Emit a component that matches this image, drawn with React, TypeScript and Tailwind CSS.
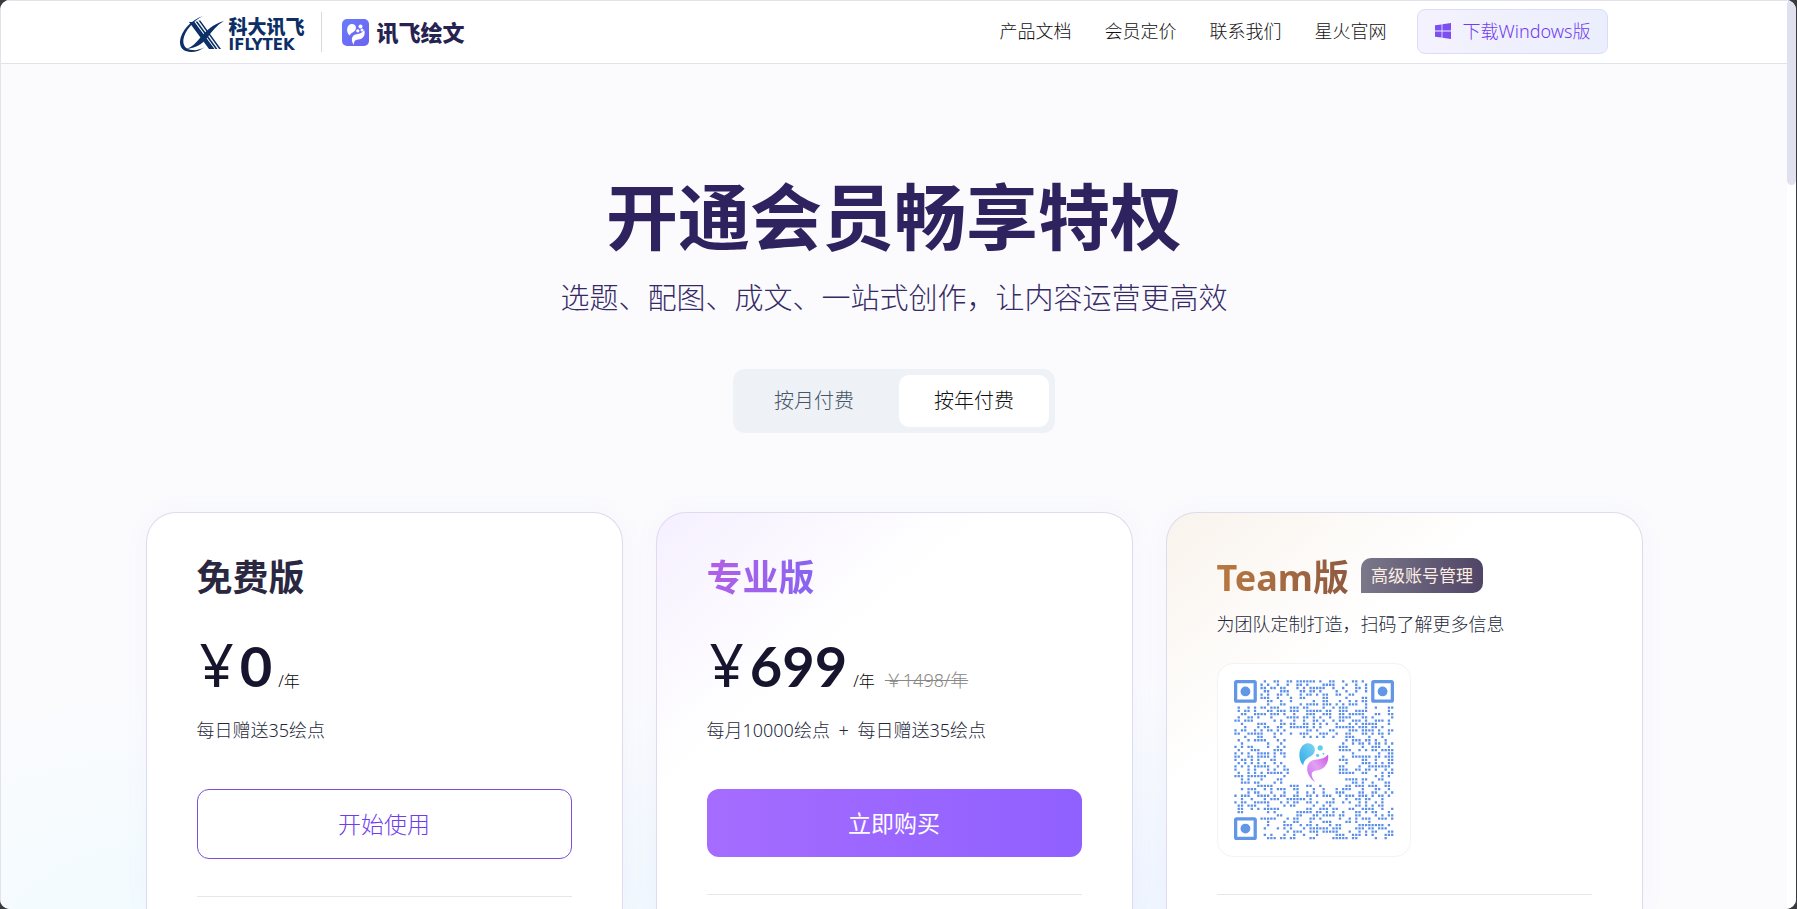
import React from 'react';
import clsx from 'clsx';

const navLinks = ['产品文档', '会员定价', '联系我们', '星火官网'];

const IflytekMark = () => (
  <svg viewBox="0 0 45 37" className="w-[45px] h-[37px] mt-1 shrink-0" fill="#0b2f66" aria-hidden="true">
    <path d="M23 0C11 4 1 15 0 25c-.6 7 4 11 11 11 5 0 10-2 14-5-5 2.600-9 3.500-12.500 3C6 33.400 2.500 30 3.500 23 4.800 15 13 5 23 0Z" />
    <path d="M44 5C33 8 26 15 20 22c-4 5-8 9-14 11 10-.6 16-5 21-11C32 15 37 9 44 5Z" />
    <path d="M9 6h5.500l20 27h-5.500zM15.500 5.500h2l20 27.500h-2zM18.500 4.500h1.800l20.700 28.500h-1.900z" />
  </svg>
);

const AppIcon = () => (
  <svg viewBox="0 0 27 27" className="w-[27px] h-[27px] shrink-0" aria-hidden="true">
    <defs>
      <linearGradient id="app-icon" x1="0" y1="0" x2="1" y2="1">
        <stop offset="0" stopColor="#6a7cfa" />
        <stop offset="1" stopColor="#6c62f2" />
      </linearGradient>
    </defs>
    <rect width="27" height="27" rx="5" fill="url(#app-icon)" />
    <path d="M8 16.500C4 14.500 3.800 5.500 9.600 5c4-.2 5.400 3.400 3.600 6.200C11.500 13.500 8.500 13.500 8 16.500Z" fill="#fff" />
    <path d="M12 26C8.500 22 9.500 16.500 13.500 15.600c3.600-.6 6.500-1.400 8.700-4.600 1.600 5-1 9.400-6 9.600-3 .2-4.600 1.800-4.200 5.400Z" fill="#fff" />
    <circle cx="18.500" cy="7.500" r="2" fill="#fff" />
    <circle cx="15.800" cy="11.800" r="1.600" fill="#fff" />
    <circle cx="20" cy="11" r="1.500" fill="#fff" />
  </svg>
);

const WindowsIcon = () => (
  <svg viewBox="0 0 16 16" className="w-4 h-4" fill="#7c4ff0" aria-hidden="true">
    <path d="M0 2.300 6.600 1.400v6.200H0zM7.400 1.300 16 0v7.600H7.400zM0 8.400h6.600v6.200L0 13.700zM7.400 8.400H16V16l-8.600-1.200z" />
  </svg>
);

const QR_SIZE = 49;

const isReserved = (x: number, y: number) => {
  const nearLeft = x < 8;
  const nearTop = y < 8;
  const corner = (nearLeft && nearTop) || (x > QR_SIZE - 9 && nearTop) || (nearLeft && y > QR_SIZE - 9);
  const logo = x > 16 && x < 32 && y > 17 && y < 32;
  return corner || logo;
};

const buildModules = () => {
  let seed = 20731;
  const modules: [number, number][] = [];
  for (let y = 0; y < QR_SIZE; y++) {
    for (let x = 0; x < QR_SIZE; x++) {
      seed = (seed * 16807) % 2147483647;
      if (!isReserved(x, y) && seed % 1000 < 480) modules.push([x, y]);
    }
  }
  return modules;
};

const qrPath = buildModules()
  .map(([x, y]) => `M${x * 10 + 1} ${y * 10 + 1}h7v7h-7z`)
  .join('');

const QrCode = () => (
  <svg viewBox="0 0 490 490" className="w-full h-full" role="img" aria-label="扫码了解更多信息">
    <defs>
      <linearGradient id="qr-blue" x1="1" y1="0" x2="0" y2="1">
        <stop offset="0" stopColor="#7fd6f2" />
        <stop offset="1" stopColor="#2fa9ea" />
      </linearGradient>
      <linearGradient id="qr-pink" x1="1" y1="0" x2="0" y2="1">
        <stop offset="0" stopColor="#cc55e0" />
        <stop offset="0.5" stopColor="#e3a0f5" />
        <stop offset="1" stopColor="#c070f0" />
      </linearGradient>
    </defs>
    <path d={qrPath} fill="#5c8fe8" />
    {[[0, 0], [420, 0], [0, 420]].map(([x, y]) => (
      <g key={`${x}-${y}`} transform={`translate(${x} ${y})`}>
        <rect x="5" y="5" width="60" height="60" rx="3" fill="none" stroke="#6297e8" strokeWidth="10" />
        <circle cx="35" cy="35" r="15" fill="#6297e8" />
      </g>
    ))}
    <path d="M212 262C192 240 198 196 226 194c20 0 28 20 16 34-14 12-28 12-30 34Z" fill="url(#qr-blue)" />
    <path d="M248 312c-30-20-34-62 0-68 18-2 30-4 40-16 4 26-12 48-36 49-18 2-18 17-4 35Z" fill="url(#qr-pink)" />
    <circle cx="264" cy="208" r="8" fill="#62cdec" />
    <circle cx="256" cy="231" r="5" fill="#62cdec" />
    <circle cx="274" cy="226" r="3" fill="#62cdec" />
  </svg>
);

const Header = () => (
  <header className="h-16 bg-white border-y border-[#e2e3ea] shrink-0">
    <div className="w-4/5 h-full mx-auto flex items-center justify-between">
      <div className="flex items-center">
        <a href="#iflytek" className="flex items-center gap-1 text-[#0b2f66]">
          <IflytekMark />
          <span className="pt-1.5 flex flex-col">
            <span className="text-[19px] leading-5 font-black">科大讯飞</span>
            <span className="text-[15px] leading-4 font-bold font-['DejaVu_Sans',sans-serif]">IFLYTEK</span>
          </span>
        </a>
        <span className="w-px h-10 bg-[#d8d9df] ml-4 mr-5" />
        <a href="#home" className="flex items-center gap-2 text-[#262351]">
          <AppIcon />
          <span className="text-[22px] leading-7 font-black">讯飞绘文</span>
        </a>
      </div>
      <div className="pb-0.5 flex items-center gap-[30px]">
        <nav className="flex items-center gap-[33px]">
          {navLinks.map((link) => (
            <a key={link} href={`#${link}`} className="text-[18px] leading-7 font-light text-[#111]">{link}</a>
          ))}
        </nav>
        <button className="h-[45px] px-[17px] flex items-center gap-3 rounded-lg border border-[#dcdcf6] bg-linear-to-r from-[#f4f2fe] to-[#ebeefc] text-[18px] font-light text-[#6f3cf0]">
          <WindowsIcon />
          下载Windows版
        </button>
      </div>
    </div>
  </header>
);

const BillingToggle = () => (
  <div role="tablist" className="mt-[51px] mx-auto flex gap-2.5 p-1.5 rounded-xl bg-[#eef1f6] text-[20px] font-light">
    <button role="tab" aria-selected="false" className="w-[150px] h-[52px] rounded-[10px] text-[#475569]">按月付费</button>
    <button role="tab" aria-selected="true" className="w-[150px] h-[52px] rounded-[10px] bg-white text-[#111]">按年付费</button>
  </div>
);

type CardProps = { title: string; titleClass: string; cardClass?: string; badge?: string; children: React.ReactNode };

const Card = ({ title, titleClass, cardClass = 'bg-white', badge, children }: CardProps) => (
  <article className={clsx('px-[50px] pt-[41px] rounded-t-[30px] border border-b-0 border-[#dedbee] shadow-[0_0_24px_rgba(120,130,220,0.05)]', cardClass)}>
    <div className="flex items-start gap-3">
      <h2 className={clsx('text-[36px] leading-12 font-bold', titleClass)}>{title}</h2>
      {badge && (
        <span className="mt-1 h-[35px] px-2.5 flex items-center rounded-[10px] rounded-bl-none bg-linear-to-r from-[#7b788a] to-[#504566] text-[17px] text-[#fdeee2]">{badge}</span>
      )}
    </div>
    {children}
    <hr className="mt-[37px] border-[#e6e7ec]" />
  </article>
);

const Price = ({ amount, original }: { amount: string; original?: string }) => (
  <p className="mt-[30px] mb-5 h-16 flex items-baseline text-[#17152d]">
    <span className="pl-[3px] pr-1.5 text-[60px] leading-16">¥</span>
    <span className="text-[56px] leading-16 font-bold font-['Lato',sans-serif]">{amount}</span>
    <span className="ml-1.5 text-[16px] font-light text-black">/年</span>
    {original && <del className="ml-2.5 text-[18px] font-light text-[#888]">{original}</del>}
  </p>
);

const App = () => (
  <div className="h-screen bg-[#3a3b3f] font-['Noto_Sans','Noto_Sans_CJK_SC',sans-serif]">
    <div className="h-full mr-px flex rounded-[10px] overflow-hidden bg-white">
      <div className="flex-1 flex flex-col border-l border-[#e2e3ea]">
        <Header />
        <main className="flex-1 min-h-0 flex flex-col overflow-hidden bg-[#fbfbfe] bg-[radial-gradient(ellipse_800px_380px_at_14%_105%,#effbff_0%,transparent_70%),radial-gradient(ellipse_900px_380px_at_54%_105%,#eaf2ff_0%,transparent_75%)]">
          <h1 className="mt-[108px] text-center text-[72px] leading-[88px] font-bold text-[#2f235f]">开通会员畅享特权</h1>
          <p className="mt-[18px] text-center text-[29px] leading-10 font-light text-[#362a66]">选题、配图、成文、一站式创作，让内容运营更高效</p>
          <BillingToggle />
          <section className="mt-[79px] w-full max-w-[1497px] mx-auto flex-1 grid grid-cols-3 gap-[33px]">
            <Card title="免费版" titleClass="text-[#2a2740]">
              <Price amount="0" />
              <p className="text-[18px] leading-7 font-light text-[#1e293b]">每日赠送35绘点</p>
              <button className="mt-[45px] w-full h-[70px] rounded-xl border border-[#7c4fd8] text-[23px] font-light text-[#6f3cf0]">开始使用</button>
            </Card>
            <Card
              title="专业版"
              titleClass="bg-linear-to-r from-[#b25fe6] to-[#8763f2] bg-clip-text text-transparent"
              cardClass="bg-white bg-linear-to-br from-[#f6f0ff] to-white to-35%"
            >
              <Price amount="699" original="￥1498/年" />
              <p className="text-[18px] leading-7 font-light text-[#1e293b]">每月10000绘点<span className="mx-1"> + </span>每日赠送35绘点</p>
              <button className="mt-[45px] w-full h-[68px] rounded-xl bg-linear-to-r from-[#a56cff] to-[#9060ff] text-[23px] text-white">立即购买</button>
            </Card>
            <Card
              title="Team版"
              titleClass="bg-linear-to-r from-[#b87840] to-[#8f5a40] bg-clip-text text-transparent"
              cardClass="bg-white bg-linear-to-br from-[#f9f3ec] to-white to-35%"
              badge="高级账号管理"
            >
              <p className="mt-2 text-[18px] leading-7 font-light text-[#1e293b]">为团队定制打造，扫码了解更多信息</p>
              <div className="mt-[25px] w-[194px] h-[194px] p-4 rounded-2xl border border-[#f3f2f5] bg-white">
                <QrCode />
              </div>
            </Card>
          </section>
        </main>
      </div>
      <div className="w-[9px] bg-white">
        <div className="h-[185px] rounded-full bg-[#e0e1ee]" />
      </div>
    </div>
  </div>
);

export default App;
